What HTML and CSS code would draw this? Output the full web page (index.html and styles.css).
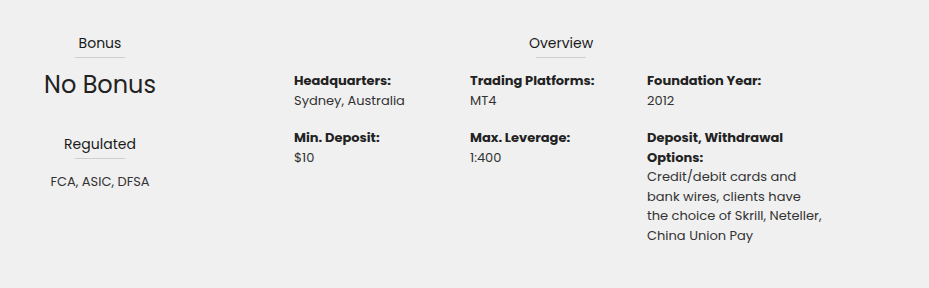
FILE: index.html
```html
<!DOCTYPE html>
<html>
<head>
<meta charset="utf-8">
<link rel="stylesheet" href="styles.css">
</head>
<body>
<div class="wrap">
  <div class="side">
    <div class="block">
      <h3 class="title">Bonus</h3>
      <div class="rule"></div>
      <div class="bonus">No Bonus</div>
    </div>
    <div class="block reg">
      <h3 class="title">Regulated</h3>
      <div class="rule"></div>
      <div class="regs">FCA, ASIC, DFSA</div>
    </div>
  </div>
  <div class="overview">
    <h3 class="title">Overview</h3>
    <div class="rule"></div>
    <div class="grid">
      <div class="item"><div class="label">Headquarters:</div><div class="value">Sydney, Australia</div></div>
      <div class="item"><div class="label">Trading Platforms:</div><div class="value">MT4</div></div>
      <div class="item"><div class="label">Foundation Year:</div><div class="value">2012</div></div>
      <div class="item"><div class="label">Min. Deposit:</div><div class="value">$10</div></div>
      <div class="item"><div class="label">Max. Leverage:</div><div class="value">1:400</div></div>
      <div class="item"><div class="label">Deposit, Withdrawal Options:</div><div class="value">Credit/debit cards and bank wires, clients have the choice of Skrill, Neteller, China Union Pay</div></div>
    </div>
  </div>
</div>
</body>
</html>
```
FILE: styles.css
```css
html, body {
  margin: 0;
  padding: 0;
  background: #f0f0f0;
}
body {
  font-family: "Poppins", "Open Sans", "DejaVu Sans", sans-serif;
  color: #222;
}
.wrap {
  display: flex;
  padding-top: 33px;
}
.side {
  width: 200px;
  text-align: center;
}
.title {
  margin: 0;
  font-size: 14px;
  font-weight: 400;
  line-height: 20px;
  text-align: center;
  color: #1a1a1a;
}
.rule {
  width: 50px;
  height: 1px;
  background: #cfcfcf;
  margin: 4px auto 0;
}
.bonus {
  font-size: 24px;
  line-height: 30px;
  margin-top: 12px;
  color: #222;
}
.reg {
  margin-top: 34px;
}
.regs {
  font-size: 13px;
  line-height: 18px;
  margin-top: 14px;
  color: #333;
}
.overview {
  margin-left: 94px;
  width: 534px;
}
.grid {
  margin-top: 13px;
  display: grid;
  grid-template-columns: 176px 177px 181px;
  row-gap: 18px;
}
.item {
  font-size: 13px;
  line-height: 19.5px;
}
.label {
  font-weight: 700;
  padding-right: 20px;
  color: #222;
}
.value {
  padding-right: 4px;
  color: #333;
}
```
